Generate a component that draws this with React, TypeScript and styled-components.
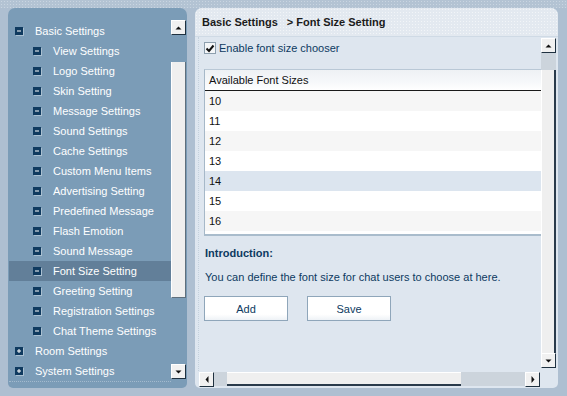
// 채팅 관리자 설정 화면 - 글꼴 크기 설정
import React from "react";
import styled, { createGlobalStyle } from "styled-components";

const GlobalStyle = createGlobalStyle`
    html, body {
        margin: 0;
        padding: 0;
        background: #aebfd1;
        font-family: "Liberation Sans", Arial, sans-serif;
        font-size: 11px;
    }
`;

const Page = styled.div`
    width: 567px;
    height: 396px;
    display: flex;
    flex-direction: column;
    overflow: hidden;
`;

const TopStrip = styled.div`
    height: 8px;
    background-color: #b3c3d3;
    background-image: radial-gradient(#c9d5e1 0.7px, transparent 0.8px);
    background-size: 3px 3px;
`;

const Body = styled.div`
    flex: 1;
    display: flex;
    gap: 8px;
    padding: 0 9px 8px 8px;
`;

const LeftPanel = styled.div`
    width: 179px;
    background: #7b9cb7;
    border-radius: 7px 7px 5px 5px;
    display: flex;
    padding-left: 1px;
    box-sizing: border-box;
`;

const Tree = styled.ul`
    list-style: none;
    margin: 13px 0 0;
    padding: 0;
    width: 162px;
    height: 360px;
    border-bottom: 1px dotted #a3bace;
`;

const Node = styled.li<{ $level: number; $active?: boolean }>`
    height: 20px;
    display: flex;
    align-items: center;
    padding-left: ${(p) => (p.$level === 0 ? 6 : 24)}px;
    background: ${(p) => (p.$active ? "#627f99" : "transparent")};
    color: #ffffff;
    white-space: nowrap;
    svg {
        margin-right: 11px;
        flex-shrink: 0;
    }
`;

const ScrollCol = styled.div`
    width: 15px;
    display: flex;
    flex-direction: column;
    padding: 12px 0 9px;
`;

const ScrollBtn = styled.div`
    width: 15px;
    height: 15px;
    box-sizing: border-box;
    background: #f1f1f1;
    border-top: 1px solid #ffffff;
    border-left: 1px solid #ffffff;
    border-right: 1px solid #1f3140;
    border-bottom: 1px solid #1f3140;
    display: flex;
    align-items: center;
    justify-content: center;
    flex-shrink: 0;
`;

const Thumb = styled.div<{ $top: number; $height: number }>`
    margin-top: ${(p) => p.$top}px;
    height: ${(p) => p.$height}px;
    background: #efefef;
    border-left: 1px solid #ffffff;
    border-right: 1px solid #5f6f7c;
    border-bottom: 1px solid #5f6f7c;
    box-sizing: border-box;
`;

const Spacer = styled.div`
    flex: 1;
`;

const RightPanel = styled.div`
    flex: 1;
    background: #dee6ef;
    border-radius: 7px 7px 5px 5px;
    display: flex;
    flex-direction: column;
    overflow: hidden;
    padding-bottom: 2px;
`;

const Header = styled.div`
    height: 28px;
    display: flex;
    align-items: center;
    padding-left: 7px;
    font-weight: bold;
    color: #1b1b1b;
    background-color: #e3e9f0;
    background-image: radial-gradient(#f2f5f8 0.7px, transparent 0.8px);
    background-size: 3px 3px;
    border-bottom: 1px solid #cfdae5;
    span {
        margin-left: 9px;
    }
`;

const Frame = styled.div`
    flex: 1;
    display: grid;
    grid-template-columns: 346px 15px;
    grid-template-rows: 1fr 15px;
`;

const Viewport = styled.div`
    overflow: hidden;
    padding: 4px 0 0 5px;
    border-left: 1px dotted #c4d1dd;
    margin-left: 3px;
`;

const CheckRow = styled.label`
    display: flex;
    align-items: center;
    gap: 3px;
    color: #0d3a61;
    height: 14px;
`;

const CheckBox = styled.span`
    width: 12px;
    height: 12px;
    box-sizing: border-box;
    border: 1px solid #8d9fae;
    background: #f4f6f8;
    display: flex;
    align-items: center;
    justify-content: center;
`;

const Table = styled.div`
    margin-top: 14px;
    width: 420px;
    border-top: 1px solid #b9c8d6;
    border-left: 1px solid #a6b8c8;
    border-bottom: 2px solid #a9bccc;
    background: #ffffff;
    padding-bottom: 3px;
`;

const TableHead = styled.div`
    height: 20px;
    display: flex;
    align-items: center;
    padding-left: 4px;
    color: #111111;
    background: linear-gradient(#eef1f4, #f6f8fa 60%, #ffffff);
    border-bottom: 1px solid #1a1a1a;
`;

const Row = styled.div<{ $tone: "grey" | "white" | "blue" }>`
    height: 20px;
    display: flex;
    align-items: center;
    padding-left: 4px;
    color: #111111;
    background: ${(p) => (p.$tone === "grey" ? "#f6f6f6" : p.$tone === "blue" ? "#dce5ef" : "#ffffff")};
`;

const IntroTitle = styled.div`
    margin: 10px 0 0 1px;
    font-weight: bold;
    color: #0d3a61;
    line-height: 14px;
`;

const IntroText = styled.div`
    margin: 10px 0 0 1px;
    color: #0d3a61;
    line-height: 14px;
`;

const Buttons = styled.div`
    display: flex;
    gap: 19px;
    margin-top: 12px;
`;

const Button = styled.button`
    width: 84px;
    height: 25px;
    border: 1px solid #8fa6ba;
    background: linear-gradient(#ffffff 75%, #eef2f6);
    color: #0d3a61;
    font-family: "Liberation Sans", Arial, sans-serif;
    font-size: 11px;
    padding: 0;
`;

const VScroll = styled.div`
    display: flex;
    flex-direction: column;
    padding: 1px 0 3px;
`;

const Track = styled.div<{ $size: number; $vertical?: boolean }>`
    ${(p) => (p.$vertical ? `height: ${p.$size}px;` : `width: ${p.$size}px;`)}
    background: #ccd4dc;
    flex-shrink: 0;
`;

const VThumb = styled.div`
    flex: 1;
    background: #efefef;
    border-left: 1px solid #ffffff;
    border-right: 2px solid #2a3b4b;
`;

const HScroll = styled.div`
    display: flex;
    padding-left: 4px;
    padding-top: 1px;
`;

const HThumb = styled.div`
    width: 234px;
    background: #efefef;
    border-top: 1px solid #ffffff;
    border-bottom: 2px solid #2a3b4b;
    box-sizing: border-box;
    flex-shrink: 0;
`;

const Corner = styled.div``;

function BoxIcon({ open }: { open: boolean }) {
    return (
        <svg width="9" height="9" viewBox="0 0 9 9">
            <rect x="1" y="1" width="8" height="8" fill="#a9bfd0" />
            <rect x="0" y="0" width="8" height="8" fill="#0f3a5f" />
            <rect x="2" y="3.5" width="4" height="1" fill="#ffffff" />
            {!open && <rect x="3.5" y="2" width="1" height="4" fill="#ffffff" />}
        </svg>
    );
}

function Arrow({ dir }: { dir: "up" | "down" | "left" | "right" }) {
    const pts = {
        up: "1.5,4.5 4.5,1.5 7.5,4.5",
        down: "1.5,1.5 4.5,4.5 7.5,1.5",
        left: "4.5,1 1.5,4.5 4.5,8",
        right: "1.5,1 4.5,4.5 1.5,8",
    }[dir];
    const vertical = dir === "up" || dir === "down";
    return (
        <svg width={vertical ? 9 : 6} height={vertical ? 6 : 9} viewBox={vertical ? "0 0 9 6" : "0 0 6 9"}>
            <polygon points={pts} fill="#111111" />
        </svg>
    );
}

interface ITreeItem {
    label: string;
    level: number;
    open?: boolean;
    active?: boolean;
}

const treeItems: ITreeItem[] = [
    { label: "Basic Settings", level: 0, open: true },
    { label: "View Settings", level: 1 },
    { label: "Logo Setting", level: 1 },
    { label: "Skin Setting", level: 1 },
    { label: "Message Settings", level: 1 },
    { label: "Sound Settings", level: 1 },
    { label: "Cache Settings", level: 1 },
    { label: "Custom Menu Items", level: 1 },
    { label: "Advertising Setting", level: 1 },
    { label: "Predefined Message", level: 1 },
    { label: "Flash Emotion", level: 1 },
    { label: "Sound Message", level: 1 },
    { label: "Font Size Setting", level: 1, active: true },
    { label: "Greeting Setting", level: 1 },
    { label: "Registration Settings", level: 1 },
    { label: "Chat Theme Settings", level: 1 },
    { label: "Room Settings", level: 0, open: false },
    { label: "System Settings", level: 0, open: false },
];

const fontSizes = [10, 11, 12, 13, 14, 15, 16];

function App() {
    return (
        <Page>
            <GlobalStyle />
            <TopStrip />
            <Body>
                <LeftPanel>
                    <Tree>
                        {treeItems.map((item) => (
                            <Node key={item.label} $level={item.level} $active={item.active}>
                                <BoxIcon open={item.level === 1 || !!item.open} />
                                {item.label}
                            </Node>
                        ))}
                    </Tree>
                    <ScrollCol>
                        <ScrollBtn><Arrow dir="up" /></ScrollBtn>
                        <Thumb $top={27} $height={236} />
                        <Spacer />
                        <ScrollBtn><Arrow dir="down" /></ScrollBtn>
                    </ScrollCol>
                </LeftPanel>
                <RightPanel>
                    <Header>
                        Basic Settings <span>&gt; Font Size Setting</span>
                    </Header>
                    <Frame>
                        <Viewport>
                            <CheckRow>
                                <CheckBox>
                                    <svg width="10" height="9" viewBox="0 0 10 9">
                                        <polyline points="1.5,4.5 4,7 8.5,1.5" fill="none" stroke="#111" strokeWidth="2" />
                                    </svg>
                                </CheckBox>
                                Enable font size chooser
                            </CheckRow>
                            <Table>
                                <TableHead>Available Font Sizes</TableHead>
                                {fontSizes.map((size, i) => (
                                    <Row key={size} $tone={size === 14 ? "blue" : i % 2 === 0 ? "grey" : "white"}>
                                        {size}
                                    </Row>
                                ))}
                            </Table>
                            <IntroTitle>Introduction:</IntroTitle>
                            <IntroText>You can define the font size for chat users to choose at here.</IntroText>
                            <Buttons>
                                <Button>Add</Button>
                                <Button>Save</Button>
                            </Buttons>
                        </Viewport>
                        <VScroll>
                            <ScrollBtn><Arrow dir="up" /></ScrollBtn>
                            <Track $size={17} $vertical />
                            <VThumb />
                            <ScrollBtn><Arrow dir="down" /></ScrollBtn>
                        </VScroll>
                        <HScroll>
                            <ScrollBtn><Arrow dir="left" /></ScrollBtn>
                            <Track $size={13} />
                            <HThumb />
                            <Track $size={64} />
                            <ScrollBtn><Arrow dir="right" /></ScrollBtn>
                        </HScroll>
                        <Corner />
                    </Frame>
                </RightPanel>
            </Body>
        </Page>
    );
}

export default App;
